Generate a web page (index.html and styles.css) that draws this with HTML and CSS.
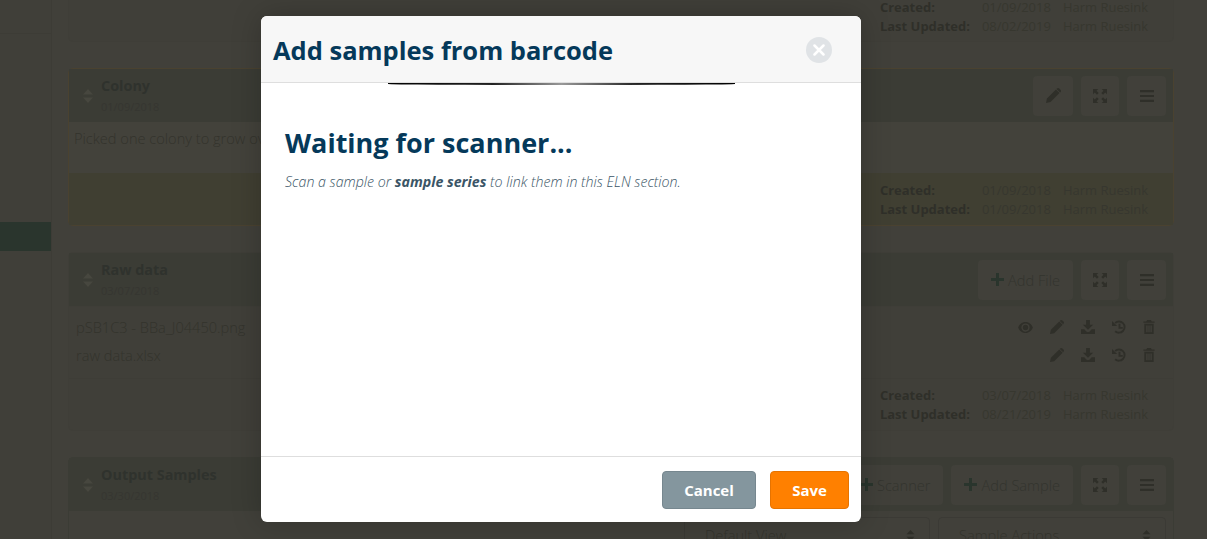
FILE: index.html
```html
<!DOCTYPE html>
<html lang="en">
<head>
  <meta charset="UTF-8">
  <title>Add samples from barcode</title>
  <link rel="stylesheet" href="styles.css">
</head>
<body>

<svg class="defs" width="0" height="0">
  <symbol id="i-sort" viewBox="0 0 10 14"><path d="M5 0 10 5.500H0ZM0 8.500H10L5 14Z"/></symbol>
  <symbol id="i-pencil" viewBox="0 0 16 16"><path d="M0 16 1 11.200 10.600 1.600 14.400 5.400 4.800 15ZM11.600.6C12.400-.2 13.400-.2 14.200.6L15.400 1.800C16.200 2.600 16.200 3.600 15.400 4.400L15 4.800 11.200 1Z"/></symbol>
  <symbol id="i-expand" viewBox="0 0 16 16"><path d="M0 0H6L4 2 6.500 4.500 4.500 6.500 2 4 0 6ZM16 0V6L14 4 11.500 6.500 9.500 4.500 12 2 10 0ZM0 16V10L2 12 4.500 9.500 6.500 11.500 4 14 6 16ZM16 16H10L12 14 9.500 11.500 11.500 9.500 14 12 16 10Z"/></symbol>
  <symbol id="i-bars" viewBox="0 0 14 14"><path d="M0 1H14V3.200H0ZM0 5.900H14V8.100H0ZM0 10.800H14V13H0Z"/></symbol>
  <symbol id="i-plus" viewBox="0 0 14 14"><path d="M5.400 0H8.600V5.400H14V8.600H8.600V14H5.400V8.600H0V5.400H5.400Z"/></symbol>
  <symbol id="i-eye" viewBox="0 0 16 12"><path fill-rule="evenodd" d="M8 0C12 0 15 3 16 6 15 9 12 12 8 12S1 9 0 6C1 3 4 0 8 0ZM8 1.500A4.500 4.500 0 1 0 8 10.500 4.500 4.500 0 0 0 8 1.500ZM8 3A3 3 0 1 1 8 9 3 3 0 0 1 8 3Z"/></symbol>
  <symbol id="i-download" viewBox="0 0 15 15"><path d="M5.500 0H9.500V5H13L7.500 10.500 2 5H5.500ZM0 10H3.500L6 12.500C6.800 13.200 8.200 13.200 9 12.500L11.500 10H15V15H0Z"/></symbol>
  <symbol id="i-history" viewBox="0 0 15 15">
    <path d="M3.400 3.200A6 6 0 1 1 3.400 12" fill="none" stroke="currentColor" stroke-width="2"/>
    <path d="M0 1 0 6.500H5.500ZM7 4H9V7.500H11.500V9.300H7Z"/>
  </symbol>
  <symbol id="i-trash" viewBox="0 0 12 15"><path fill-rule="evenodd" d="M4 0H8L9 1.500H12V3H0V1.500H3ZM1 4H11V15H1ZM3 6V13H4.500V6ZM5.300 6V13H6.700V6ZM7.500 6V13H9V6Z"/></symbol>
</svg>

<div class="page">
  <aside class="sidebar">
    <div class="side-top"></div>
    <div class="side-active"></div>
  </aside>

  <main class="content">
    <section class="panel panel-first">
      <div class="panel-foot">
        <div class="audit">
          <b>Created:</b><span>01/09/2018</span><span>Harm Ruesink</span>
          <b>Last Updated:</b><span>08/02/2019</span><span>Harm Ruesink</span>
        </div>
      </div>
    </section>

    <section class="panel panel-colony">
      <header class="panel-head">
        <svg class="sort"><use href="#i-sort"/></svg>
        <div class="head-text">
          <h3>Colony</h3>
          <small>01/09/2018</small>
        </div>
        <div class="tools">
          <button class="tool"><svg class="ic-pencil"><use href="#i-pencil"/></svg></button>
          <button class="tool tool-sm"><svg class="ic-expand"><use href="#i-expand"/></svg></button>
          <button class="tool tool-bars"><svg class="ic-bars"><use href="#i-bars"/></svg></button>
        </div>
      </header>
      <div class="colony-body">Picked one colony to grow over</div>
      <div class="panel-foot">
        <div class="audit">
          <b>Created:</b><span>01/09/2018</span><span>Harm Ruesink</span>
          <b>Last Updated:</b><span>01/09/2018</span><span>Harm Ruesink</span>
        </div>
      </div>
    </section>

    <section class="panel">
      <header class="panel-head">
        <svg class="sort"><use href="#i-sort"/></svg>
        <div class="head-text">
          <h3>Raw data</h3>
          <small>03/07/2018</small>
        </div>
        <div class="tools">
          <button class="tool tool-text"><svg class="ic-plus"><use href="#i-plus"/></svg>Add File</button>
          <button class="tool tool-sm"><svg class="ic-expand"><use href="#i-expand"/></svg></button>
          <button class="tool tool-bars"><svg class="ic-bars"><use href="#i-bars"/></svg></button>
        </div>
      </header>
      <div class="files">
        <div class="file">
          <span>pSB1C3 - BBa_J04450.png</span>
          <div class="file-icons">
            <svg class="ic-eye"><use href="#i-eye"/></svg>
            <svg class="ic-file"><use href="#i-pencil"/></svg>
            <svg class="ic-file"><use href="#i-download"/></svg>
            <svg class="ic-file"><use href="#i-history"/></svg>
            <svg class="ic-trash"><use href="#i-trash"/></svg>
          </div>
        </div>
        <div class="file">
          <span>raw data.xlsx</span>
          <div class="file-icons">
            <svg class="ic-file"><use href="#i-pencil"/></svg>
            <svg class="ic-file"><use href="#i-download"/></svg>
            <svg class="ic-file"><use href="#i-history"/></svg>
            <svg class="ic-trash"><use href="#i-trash"/></svg>
          </div>
        </div>
      </div>
      <div class="panel-foot">
        <div class="audit">
          <b>Created:</b><span>03/07/2018</span><span>Harm Ruesink</span>
          <b>Last Updated:</b><span>08/21/2019</span><span>Harm Ruesink</span>
        </div>
      </div>
    </section>

    <section class="panel panel-last">
      <header class="panel-head">
        <svg class="sort"><use href="#i-sort"/></svg>
        <div class="head-text">
          <h3>Output Samples</h3>
          <small>03/30/2018</small>
        </div>
        <div class="tools">
          <button class="tool tool-text"><svg class="ic-plus"><use href="#i-plus"/></svg>Scanner</button>
          <button class="tool tool-text"><svg class="ic-plus"><use href="#i-plus"/></svg>Add Sample</button>
          <button class="tool tool-sm"><svg class="ic-expand"><use href="#i-expand"/></svg></button>
          <button class="tool tool-bars"><svg class="ic-bars"><use href="#i-bars"/></svg></button>
        </div>
      </header>
      <div class="select-row">
        <div class="fake-select sel-view">Default View<svg class="sort-sm"><use href="#i-sort"/></svg></div>
        <div class="fake-select sel-actions">Sample Actions<svg class="sort-sm"><use href="#i-sort"/></svg></div>
      </div>
    </section>
  </main>
</div>

<div class="modal">
  <div class="modal-head">
    <h2>Add samples from barcode</h2>
    <span class="close">
      <svg viewBox="0 0 12 12"><path d="M1.500 1.500 10.500 10.500M10.500 1.500 1.500 10.500"/></svg>
    </span>
  </div>
  <div class="scan-line"></div>
  <div class="modal-body">
    <h1>Waiting for scanner...</h1>
    <p>Scan a sample or <b>sample series</b> to link them in this ELN section.</p>
  </div>
  <div class="modal-foot">
    <button class="btn btn-cancel">Cancel</button>
    <button class="btn btn-save">Save</button>
  </div>
</div>

</body>
</html>
```

FILE: styles.css
```css
html, body {
  margin: 0;
  height: 539px;
  overflow: hidden;
}
body {
  position: relative;
  background: #41403a;
  font-family: "Open Sans", sans-serif;
  color: #33332c;
}
.defs {
  position: absolute;
}
svg {
  fill: currentColor;
}

.page {
  display: flex;
  height: 539px;
  overflow: hidden;
}
.sidebar {
  width: 51px;
  flex: none;
  border-right: 1px solid #3d3c36;
  background: #403f39;
}
.side-top {
  height: 33px;
  border-bottom: 1px solid #3d3c36;
}
.side-active {
  height: 29px;
  margin-top: 188px;
  background: #2a352d;
}

.content {
  flex: 1;
  padding: 0 33px 0 16px;
  min-width: 0;
}
.panel {
  border: 1px solid #3f3e38;
  border-radius: 5px;
  margin-bottom: 26px;
  background: #403f39;
}
.panel-first {
  margin-top: -12px;
}
.panel-first .panel-foot {
  padding-top: 8px;
}
.panel-colony {
  border-color: #4a4230;
  background: #43423b;
}
.panel-colony .panel-foot {
  background: #403f32;
  border-top: 0;
  padding-top: 8px;
}
.panel-last {
  margin-bottom: 0;
  border-color: #3b3c35;
  background: #41403a;
}

.panel-head {
  display: flex;
  align-items: center;
  height: 53px;
  background: #3b3c35;
  box-sizing: border-box;
  padding: 0 7px 0 14px;
}
.sort {
  width: 10px;
  height: 14px;
  color: #47473f;
  margin-right: 8px;
  flex: none;
}
.head-text {
  flex: 1;
  margin-top: 1px;
}
.head-text h3 {
  margin: 0;
  font-size: 14.400px;
  line-height: 22px;
  font-weight: 700;
  color: #2f322d;
}
.head-text small {
  display: block;
  font-size: 11px;
  line-height: 20px;
  color: #363631;
}
.tools {
  display: flex;
  gap: 8px;
}
.tool {
  display: flex;
  align-items: center;
  justify-content: center;
  width: 40px;
  height: 40px;
  padding: 0;
  border: 0;
  border-radius: 4px;
  background: #41403a;
  color: #2f2f29;
  font: 300 14.600px "Open Sans", sans-serif;
}
.tool-sm {
  width: 38px;
}
.tool-bars {
  width: 39px;
}
.tool-text {
  width: auto;
  padding: 0 13px;
  color: #33342e;
}
.ic-pencil {
  width: 15px;
  height: 15px;
}
.ic-expand {
  width: 14px;
  height: 14px;
}
.ic-bars {
  width: 14px;
  height: 14px;
}
.ic-plus {
  width: 13px;
  height: 13px;
  margin-right: 4px;
  color: #2a352d;
}

.colony-body {
  height: 51px;
  box-sizing: border-box;
  padding: 4px 5px 0;
  font-size: 14.600px;
  line-height: 24px;
  font-weight: 300;
}

.files {
  padding: 6px 18px 9px 7px;
  border-top: 1px solid #3f3e38;
}
.file {
  display: flex;
  align-items: center;
  justify-content: space-between;
  height: 28px;
  font-size: 14.600px;
  font-weight: 300;
}
.file-icons {
  display: flex;
  align-items: center;
  gap: 17px;
  color: #2f2f29;
}
.ic-eye {
  width: 15px;
  height: 11px;
}
.ic-file {
  width: 14px;
  height: 14px;
}
.ic-trash {
  width: 12px;
  height: 14px;
}

.panel-foot {
  height: 52px;
  box-sizing: border-box;
  border-top: 1px solid #3e3d37;
  padding-top: 7px;
}
.audit {
  display: grid;
  grid-template-columns: 102px 81px auto;
  justify-content: end;
  padding-right: 25px;
  font-size: 13px;
  line-height: 19px;
  color: #37372f;
}
.audit b {
  color: #2f2f29;
}

.select-row {
  display: flex;
  justify-content: flex-end;
  gap: 8px;
  padding: 6px 7px 0 0;
  background: #41403a;
}
.fake-select {
  display: flex;
  align-items: center;
  justify-content: space-between;
  box-sizing: border-box;
  height: 36px;
  padding: 0 14px 0 20px;
  border: 1px solid #3b3a35;
  border-radius: 4px;
  font-size: 14.600px;
  font-weight: 300;
}
.sel-view {
  width: 246px;
}
.sel-actions {
  width: 228px;
}
.sort-sm {
  width: 9px;
  height: 11px;
  color: #2f2f29;
}

/* dialog */
.modal {
  position: absolute;
  left: 261px;
  top: 16px;
  width: 600px;
  height: 506px;
  box-sizing: border-box;
  display: flex;
  flex-direction: column;
  background: #fff;
  border-radius: 6px;
  overflow: hidden;
  box-shadow: 0 0 30px rgba(0, 0, 0, 0.22);
  color: #05395a;
}
.modal-head {
  display: flex;
  align-items: center;
  justify-content: space-between;
  height: 67px;
  flex: none;
  box-sizing: border-box;
  padding: 2px 29px 0 12px;
  background: #f7f7f7;
  border-bottom: 1px solid #dedede;
}
.modal-head h2 {
  margin: 0;
  font-size: 25.500px;
  font-weight: 700;
  color: #05395a;
}
.close {
  display: flex;
  align-items: center;
  justify-content: center;
  width: 26px;
  height: 26px;
  border-radius: 50%;
  background: #e0e3e6;
}
.close svg {
  width: 12px;
  height: 12px;
  fill: none;
  stroke: #fff;
  stroke-width: 2.500;
  stroke-linecap: round;
}
.scan-line {
  flex: none;
  height: 2px;
  margin: 0 126px 0 127px;
  border-radius: 0 0 50% 50%;
  background: linear-gradient(90deg, #000 0%, #222 30%, #999 50%, #222 72%, #000 100%);
}
.modal-body {
  flex: 1;
  padding: 40px 24px 0;
}
.modal-body h1 {
  margin: 0;
  font-size: 27px;
  line-height: 36px;
  font-weight: 700;
  color: #05395a;
}
.modal-body p {
  margin: 12px 0 0;
  font-size: 14.200px;
  line-height: 18px;
  font-style: italic;
  font-weight: 300;
  color: #3a5566;
}
.modal-body p b {
  font-weight: 700;
}
.modal-foot {
  display: flex;
  justify-content: flex-end;
  align-items: center;
  gap: 14px;
  height: 66px;
  flex: none;
  box-sizing: border-box;
  padding: 0 12px 0 0;
  border-top: 1px solid #dedede;
}
.btn {
  height: 38px;
  border-radius: 4px;
  color: #fff;
  font: 700 15px "Open Sans", sans-serif;
  padding: 0;
}
.btn-cancel {
  width: 94px;
  background: #84969e;
  border: 1px solid #76878f;
}
.btn-save {
  width: 79px;
  background: #ff8000;
  border: 1px solid #e67300;
}
```
